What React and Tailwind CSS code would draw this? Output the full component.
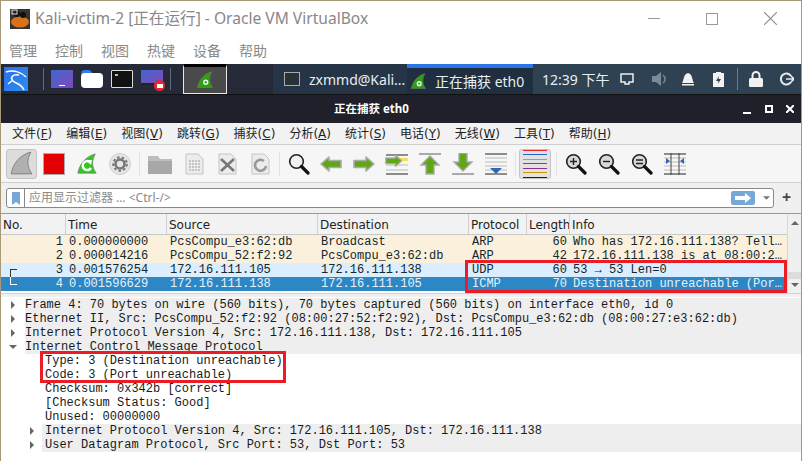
import React from "react";

const CJK = '"Noto Sans CJK SC"';
const Shark = ({ fill = "#39b51a", className = "", gear }) => (
  <svg viewBox="0 0 24 24" className={className}>
    <path d="M2 22 C4 12 10 4 21 1 C17 8 17 15 22 22 Z" fill={fill} stroke="#777" strokeWidth="0.8" />
    {gear && <circle cx="13" cy="15" r="2.6" fill="none" stroke="#dfe" strokeWidth="2" />}
  </svg>
);
const Arrow = ({ dir = 0 }) => (
  <svg viewBox="0 0 22 22" className="w-[22px] h-[22px]">
    <g transform={`rotate(${dir} 11 11)`}>
      <path d="M1 11 L9 4 V7.5 H21 V14.5 H9 V18 Z" fill="#5fa814" stroke="#aaa" strokeWidth="1.6" strokeLinejoin="round" />
    </g>
  </svg>
);
const Mag = ({ sign }) => (
  <svg viewBox="0 0 22 22" className="w-[22px] h-[22px]">
    <circle cx="8.5" cy="8.5" r="6.8" fill={sign ? "#d8d8d8" : "#eef2f2"} stroke="#222" strokeWidth="1.6" />
    <path d="M13.5 13.5 L20 20" stroke="#111" strokeWidth="3.2" strokeLinecap="round" />
    {sign === "+" && <path d="M5 8.5H12M8.5 5V12" stroke="#222" strokeWidth="1.4" />}
    {sign === "-" && <path d="M5 8.5H12" stroke="#222" strokeWidth="1.4" />}
    {sign === "=" && <path d="M5 7H12M5 10.5H12" stroke="#222" strokeWidth="1.4" />}
  </svg>
);
const Doc = ({ mark }) => (
  <svg viewBox="0 0 22 22" className="w-[22px] h-[22px]">
    <path d="M3 1 H15 L20 6 V21 H3 Z" fill="#ececec" stroke="#c4c4c4" />
    {!mark && <g stroke="#9a9a9a" strokeDasharray="2 1"><path d="M6 8H17M6 11H17M6 14H17M6 17H17" /></g>}
    {mark === "x" && <path d="M5 6 L18 18 M18 6 L5 18" stroke="#777" strokeWidth="2.6" />}
    {mark === "r" && <path d="M15 8 A5.5 5.5 0 1 0 17 13" fill="none" stroke="#999" strokeWidth="2.6" />}
  </svg>
);
const Lines = ({ children, lines, color = "#222" }) => (
  <svg viewBox="0 0 22 22" className="w-[22px] h-[22px]">
    {lines.map((y, i) => <path key={i} d={`M0 ${y}H22`} stroke={i === lines.length - 1 || i === 0 ? color : "#bbb"} />)}
    {children}
  </svg>
);

const tools = [
  <svg key="s" viewBox="0 0 22 22" className="w-[22px] h-[22px]"><rect x="0.5" y="0.5" width="21" height="21" fill="#e40000" stroke="#aaa" /></svg>,
  <div key="r" className="relative w-[22px] h-[22px]">
    <Shark className="w-[22px] h-[24px] -mt-px" fill="#2ecb1c" />
    <svg viewBox="0 0 22 22" className="absolute inset-0 w-[22px] h-[22px]"><path d="M14 9 A4.5 4.5 0 1 0 15 15" fill="none" stroke="#fff" strokeWidth="2.4" /><path d="M10 7 L16 7 L15 12 Z" fill="#fff" /></svg>
  </div>,
  <svg key="o" viewBox="0 0 22 22" className="w-[22px] h-[22px]"><circle cx="11" cy="11" r="10.5" fill="#e6e6e6" stroke="#ccc" /><circle cx="11" cy="11" r="4.5" fill="none" stroke="#777" strokeWidth="2.6" /><circle cx="11" cy="11" r="6.8" fill="none" stroke="#777" strokeWidth="2" strokeDasharray="2.6 2.2" /></svg>,
];
const Sep = () => <div className="w-px h-[24px] bg-[#e2e2e2] mx-[-3px]" />;

const rows = [
  { n: 1, t: "0.000000000", s: "PcsCompu_e3:62:db", d: "Broadcast", p: "ARP", l: 60, i: "Who has 172.16.111.138? Tell…", bg: "bg-[#faf0dc]", fg: "text-[#12272e]" },
  { n: 2, t: "0.000014216", s: "PcsCompu_52:f2:92", d: "PcsCompu_e3:62:db", p: "ARP", l: 42, i: "172.16.111.138 is at 08:00:2…", bg: "bg-[#faf0dc]", fg: "text-[#12272e]" },
  { n: 3, t: "0.001576254", s: "172.16.111.105", d: "172.16.111.138", p: "UDP", l: 60, i: "53 → 53 Len=0", bg: "bg-[#daeeff]", fg: "text-[#12272e]" },
  { n: 4, t: "0.001596629", s: "172.16.111.138", d: "172.16.111.105", p: "ICMP", l: 70, i: "Destination unreachable (Por…", bg: "bg-[#2d87c4]", fg: "text-[#e6f2fa]" },
];
const cols = "grid grid-cols-[65px_101px_151px_151px_58px_43px_218px]";
const headers = ["No.", "Time", "Source", "Destination", "Protocol", "Length", "Info"];

const Tri = ({ open }) => (
  <svg viewBox="0 0 8 8" className="w-2 h-2 shrink-0">
    {open ? <path d="M0 2H8L4 6Z" fill="#666" /> : <path d="M2 0V8L6 4Z" fill="#666" />}
  </svg>
);
const Node = ({ indent, text, open }) => (
  <div className={`flex items-center h-[14px] ${indent ? "pl-[27px]" : "pl-[8px]"}`}>
    <Tri open={open} />
    <div className={`flex-1 h-full bg-[#eeeeee] whitespace-pre overflow-hidden ${indent ? "ml-[6px] pl-[3px]" : "ml-[8px]"}`}>{text}</div>
  </div>
);
const Leaf = ({ text }) => <div className="h-[14px] pl-[44px] whitespace-pre">{text}</div>;

const menu = [["文件", "F"], ["编辑", "E"], ["视图", "V"], ["跳转", "G"], ["捕获", "C"], ["分析", "A"], ["统计", "S"], ["电话", "Y"], ["无线", "W"], ["工具", "T"], ["帮助", "H"]];

export default function App() {
  return (
    <div className="w-[802px] h-[461px] overflow-hidden bg-white border-t border-l border-r border-[#a89878] flex flex-col relative" style={{ fontFamily: `"Noto Sans", ${CJK}, sans-serif` }}>
      {/* VirtualBox title */}
      <div className="h-[34px] flex items-center shrink-0 pt-[1px]">
        <svg viewBox="0 0 20 20" className="w-[20px] h-[20px] ml-[9px]">
          <rect width="20" height="20" fill="#333" />
          <ellipse cx="10" cy="13" rx="9" ry="5.5" fill="#d9701a" />
          <circle cx="7" cy="5" r="3" fill="#111" /><circle cx="13" cy="6" r="3" fill="#111" />
          <rect x="2" y="1" width="5" height="4" fill="none" stroke="#ddd" />
        </svg>
        <span className="ml-[5px] mt-[1px] text-[15.6px] text-[#888888] leading-none whitespace-pre">Kali-victim-2 [正在运行] - Oracle VM VirtualBox</span>
        <div className="ml-auto flex items-center mr-[24px]">
          <div className="w-[12px] h-px bg-[#999] mr-[46px]" />
          <div className="w-[12px] h-[12px] border border-[#999] mr-[46px]" />
          <svg viewBox="0 0 12 12" className="w-[13px] h-[13px]"><path d="M0 0L12 12M12 0L0 12" stroke="#888" /></svg>
        </div>
      </div>
      {/* VirtualBox menu */}
      <div className="h-[29px] flex items-center pl-[8px] pt-[2px] gap-[16px] text-[14px] text-[#8a8a8a] shrink-0">
        {["管理", "控制", "视图", "热键", "设备", "帮助"].map((m) => <span key={m} className="w-[30px]">{m}</span>)}
      </div>
      {/* XFCE panel */}
      <div className="h-[30px] flex shrink-0 bg-[#2a3040] text-[#e8eef2] text-[14px]">
        <div className="flex items-center w-[272px] bg-[#262a38] relative">
          <div className="ml-[3px] w-[24px] h-[24px] bg-gradient-to-br from-[#2f6fe8] to-[#2a8cf0] overflow-hidden">
            <svg viewBox="0 0 24 24" className="w-full h-full"><path d="M2 5C10 2 18 6 22 10M15 8C8 7 6 11 9 14C12 17 17 16 20 23M9 13L4 17" fill="none" stroke="#fff" strokeWidth="1.5" /></svg>
          </div>
          <div className="ml-[15px] w-[1px] h-[22px] bg-[#666b78]" />
          <div className="ml-[7px] w-[22px] h-[18px] bg-gradient-to-br from-[#3a66d0] to-[#7a48b8] flex items-end justify-center pb-[2px]">
            <div className="w-[6px] h-px bg-white" />
          </div>
          <div className="ml-[8px] w-[22px] h-[18px] relative">
            <div className="absolute left-0 top-0 w-[11px] h-[5px] bg-[#2b7df0] rounded-t-sm" />
            <div className="absolute left-0 right-0 top-[3px] bottom-0 bg-white rounded-sm" />
          </div>
          <div className="ml-[8px] w-[22px] h-[18px] bg-[#111] border border-[#ddd] rounded-[1px] pl-[3px] pt-[3px]">
            <div className="w-[3px] h-[2px] bg-[#bbb]" />
          </div>
          <div className="ml-[8px] w-[22px] h-[15px] -mt-[3px] bg-gradient-to-br from-[#3a66d0] to-[#7a48b8] border-b-2 border-[#222] relative">
            <div className="absolute right-[-2px] bottom-[-8px] w-[11px] h-[11px] rounded-full bg-[#e8262a] flex items-center justify-center">
              <div className="w-[6px] h-[4px] bg-white" />
            </div>
          </div>
          <div className="ml-[7px] w-[1px] h-[22px] bg-[#666b78]" />
          <div className="ml-[12px] w-[44px] h-[30px] bg-[#4a4a4a] border border-[#e8e8e8] border-t-[3px] border-t-black flex items-center justify-center">
            <Shark className="w-[18px] h-[18px]" fill="#2f9e10" gear />
          </div>
        </div>
        <div className="w-[134px] bg-[#253547] flex items-center pl-[11px] overflow-hidden">
          <div className="w-[16px] h-[14px] bg-[#263238] border border-[#aaa] shrink-0" />
          <span className="ml-[9px] whitespace-pre">zxmmd@Kali...</span>
        </div>
        <div className="w-[126px] bg-[#1f2f40] border-t-[4px] border-[#2b75e8] flex items-center pl-[3px]">
          <Shark className="w-[17px] h-[17px]" fill="#2f9e10" gear />
          <span className="ml-[8px] whitespace-pre">正在捕获 eth0</span>
        </div>
        <div className="flex-1 bg-[#2f4254] flex items-center">
          <span className="ml-[9px] whitespace-pre w-[77px]">12:39 下午</span>
          <svg viewBox="0 0 14 12" className="ml-[1px] w-[14px] h-[12px]"><path d="M1 1H13V9H9V11H5V9H1Z" fill="none" stroke="#eee" strokeWidth="1.5" /></svg>
          <svg viewBox="0 0 16 16" className="ml-[17px] w-[16px] h-[16px]"><path d="M1 5H5L10 1V15L5 11H1Z" fill="#7a8a96" /><path d="M12 4A5 5 0 0 1 12 12" fill="none" stroke="#7a8a96" strokeWidth="1.5" /></svg>
          <svg viewBox="0 0 14 16" className="ml-[14px] w-[14px] h-[16px]"><path d="M1 12C3 10 2 3 7 2C12 3 11 10 13 12Z" fill="#f2f2f2" /><rect x="1" y="13" width="12" height="1.5" fill="#f2f2f2" /></svg>
          <svg viewBox="0 0 11 15" className="ml-[18px] w-[11px] h-[15px]"><path d="M3 0H8V1H11V15H0V1H3Z" fill="#f2f2f2" /><path d="M6 4L3 9H5.5L5 12L8 7H5.5Z" fill="#2f4254" /></svg>
          <div className="ml-[13px] w-px h-[22px] bg-[#6a7a86]" />
          <svg viewBox="0 0 14 16" className="ml-[11px] w-[14px] h-[16px]"><rect y="7" width="14" height="9" rx="1.5" fill="#f2f2f2" /><path d="M3.5 7V4.5A3.5 3.5 0 0 1 10.5 4.5V7" fill="none" stroke="#f2f2f2" strokeWidth="2" /></svg>
          <svg viewBox="0 0 14 14" className="ml-[17px] w-[14px] h-[14px]"><path d="M11 4A5.5 5.5 0 1 0 11 10" fill="none" stroke="#e8e8e8" strokeWidth="2" /><path d="M6 7H14M11 4L14 7L11 10" fill="none" stroke="#e8e8e8" strokeWidth="1.6" /></svg>
        </div>
      </div>
      {/* Wireshark title */}
      <div className="h-[29px] bg-[#1f2029] border-t border-[#111] flex items-center text-white text-[11.5px] font-bold shrink-0 relative">
        <span className="absolute left-[333px] whitespace-pre">正在捕获 eth0</span>
        <div className="ml-auto flex items-center mr-[7px]">
          <div className="w-[8px] h-[2px] bg-white mt-[7px] mr-[14px]" />
          <div className="w-[8px] h-[8px] border-2 border-white mr-[13px]" />
          <svg viewBox="0 0 8 8" className="w-[8px] h-[8px]"><path d="M0 0L8 8M8 0L0 8" stroke="#fff" strokeWidth="2" /></svg>
        </div>
      </div>
      {/* Wireshark menu */}
      <div className="h-[21px] bg-[#f2f2f2] flex items-center pl-[11px] gap-[14px] text-[12px] text-[#222] shrink-0 leading-none" style={{ fontFamily: `"DejaVu Sans", ${CJK}, sans-serif` }}>
        {menu.map(([m, k]) => (
          <span key={k} className="whitespace-pre">{m}(<span className="underline">{k}</span>)</span>
        ))}
      </div>
      {/* Toolbar */}
      <div className="h-[39px] bg-[#f6f6f6] border-t border-b border-[#cfcfcf] flex items-center pl-[5px] shrink-0">
        <div className="w-[31px] h-[30px] bg-[#dcdcdc] border border-[#c4c4c4] rounded-[3px] flex items-center justify-center">
          <Shark className="w-[25px] h-[25px]" fill="#b0b0b0" />
        </div>
        <div className="ml-[6px] flex items-center gap-[11px]">
          {tools}
          <Sep />
          <svg viewBox="0 0 24 20" className="w-[24px] h-[20px]"><path d="M0 2H10L12 5H24V20H0Z" fill="#bdbdbd" /><rect x="0" y="7" width="24" height="13" fill="#a8a8a8" /></svg>
          <Doc />
          <Doc mark="x" />
          <Doc mark="r" />
          <Sep />
          <div className="-mr-[1px]"><Mag /></div>
          <Arrow dir={0} />
          <Arrow dir={180} />
          <div className="relative w-[22px] h-[22px]">
            <Lines lines={[2, 7, 12, 17, 21]}><rect x="14" y="5" width="8" height="3" fill="#f4e04d" /></Lines>
            <div className="absolute -left-[1px] -top-[1px] scale-[0.8] origin-top-left"><Arrow dir={180} /></div>
          </div>
          <svg viewBox="0 0 22 22" className="w-[22px] h-[22px]"><path d="M0 1H22" stroke="#aaa" strokeWidth="2" /><path d="M11 3L20 12H15V21H7V12H2Z" fill="#5fa814" stroke="#aaa" strokeWidth="1.4" /></svg>
          <svg viewBox="0 0 22 22" className="w-[22px] h-[22px]"><path d="M0 21H22" stroke="#aaa" strokeWidth="2" /><path d="M7 0H15V9H20L11 18L2 9H7Z" fill="#5fa814" stroke="#aaa" strokeWidth="1.4" /></svg>
          <Lines lines={[1, 5, 9, 13, 17, 21]}><path d="M5 15H17L11 21Z" fill="#2f67b0" /></Lines>
          <Sep />
          <div className="-ml-[5px] -mr-[3px] w-[32px] h-[30px] bg-[#e2e2e2] border border-[#c4c4c4] rounded-[3px] flex flex-col justify-center gap-[3.5px] px-[3px]">
            {["#e22", "#26c", "#7c1", "#26c", "#838", "#c90", "#222"].map((c, i) => <div key={i} className="h-px" style={{ backgroundColor: c }} />)}
          </div>
          <Sep />
          <Mag sign="+" />
          <Mag sign="-" />
          <Mag sign="=" />
          <Lines lines={[1, 5, 9, 13, 17, 21]}>
            <path d="M7 0V22M15 0V22" stroke="#444" />
            <path d="M2 5L6 8L2 11ZM20 5L16 8L20 11Z" fill="#2f67b0" />
          </Lines>
        </div>
      </div>
      {/* Filter */}
      <div className="h-[30px] bg-[#f0f0f0] pt-[5px] pl-[5px] pr-[6px] flex items-start shrink-0">
        <div className="h-[20px] w-[768px] bg-white border border-[#888] rounded-[3px] flex items-center overflow-hidden">
          <div className="w-[18px] h-full border-r border-[#888] flex items-center justify-center">
            <svg viewBox="0 0 8 13" className="w-[8px] h-[13px]"><path d="M0 0H8V13L4 10L0 13Z" fill="#7aa7d8" /></svg>
          </div>
          <span className="ml-[4px] text-[12px] text-[#8a8a8a] whitespace-pre">应用显示过滤器 … &lt;Ctrl-/&gt;</span>
          <div className="ml-auto w-[24px] h-[14px] bg-[#78a8d8] rounded-[2px] flex items-center justify-center">
            <svg viewBox="0 0 16 10" className="w-[16px] h-[10px]"><path d="M0 3H10V0L16 5L10 10V7H0Z" fill="#fff" /></svg>
          </div>
          <svg viewBox="0 0 8 4" className="ml-[8px] mr-[3px] w-[7px] h-[4px]"><path d="M0 0H8L4 4Z" fill="#777" /></svg>
        </div>
        <span className="ml-[8px] -mt-[3px] text-[16px] font-bold text-[#444] leading-[24px]">+</span>
      </div>
      {/* Packet list */}
      <div className="h-[80px] flex shrink-0 border-t border-[#999] bg-white">
        <div className="flex-1 min-w-0">
          <div className={`${cols} h-[21px] bg-[#f2f2f2] border-b border-[#c8c8c8] text-[12px] text-[#222]`}>
            {headers.map((h) => (
              <div key={h} className="pl-[2px] pt-px border-r border-[#d0d0d0] overflow-hidden whitespace-nowrap leading-[20px]" style={{ fontFamily: '"DejaVu Sans", sans-serif' }}>{h}</div>
            ))}
          </div>
          <div style={{ fontFamily: '"Liberation Mono", monospace' }} className="text-[12px]">
            {rows.map((r) => (
              <div key={r.n} className={`${cols} h-[14px] leading-[14px] ${r.bg} ${r.fg} whitespace-pre`}>
                <div className="text-right pr-[3px] relative">
                  {r.n === 3 && <div className="absolute left-[9px] top-[6px] w-[7px] h-[9px] border-l border-t border-[#333]" />}
                  {r.n === 4 && <div className="absolute left-[9px] top-0 w-[7px] h-[8px] border-l border-b border-white" />}
                  {r.n}
                </div>
                <div className="pl-[3px]">{r.t}</div>
                <div className="pl-[3px]">{r.s}</div>
                <div className="pl-[3px]">{r.d}</div>
                <div className="pl-[3px]">{r.p}</div>
                <div className="text-right pr-[3px]">{r.l}</div>
                <div className="pl-[3px]">{r.i}</div>
              </div>
            ))}
          </div>
        </div>
        <div className="w-[14px] shrink-0 bg-[#f0f0f0] border-l border-[#d8d8d8] flex flex-col items-center">
          <svg viewBox="0 0 8 4" className="mt-[7px] w-[8px] h-[4px]"><path d="M0 4H8L4 0Z" fill="#666" /></svg>
          <div className="mt-[47px] w-full h-[7px] bg-[#dcdcdc]" />
          <svg viewBox="0 0 8 4" className="mt-[4px] w-[8px] h-[4px]"><path d="M0 0H8L4 4Z" fill="#666" /></svg>
        </div>
      </div>
      {/* Splitter */}
      <div className="h-[4px] bg-[#f0f0f0] border-t border-[#bcd8ea] shrink-0" />
      {/* Details */}
      <div className="flex-1 bg-white text-[12px] leading-[14px] text-[#1a1a1a] pt-px" style={{ fontFamily: '"Liberation Mono", monospace' }}>
        <Node text="Frame 4: 70 bytes on wire (560 bits), 70 bytes captured (560 bits) on interface eth0, id 0" />
        <Node text="Ethernet II, Src: PcsCompu_52:f2:92 (08:00:27:52:f2:92), Dst: PcsCompu_e3:62:db (08:00:27:e3:62:db)" />
        <Node text="Internet Protocol Version 4, Src: 172.16.111.138, Dst: 172.16.111.105" />
        <Node open text="Internet Control Message Protocol" />
        <Leaf text="Type: 3 (Destination unreachable)" />
        <Leaf text="Code: 3 (Port unreachable)" />
        <Leaf text="Checksum: 0x342b [correct]" />
        <Leaf text="[Checksum Status: Good]" />
        <Leaf text="Unused: 00000000" />
        <Node indent text="Internet Protocol Version 4, Src: 172.16.111.105, Dst: 172.16.111.138" />
        <Node indent text="User Datagram Protocol, Src Port: 53, Dst Port: 53" />
      </div>
      {/* Annotations */}
      <div className="absolute left-[464px] top-[259px] w-[322px] h-[33px] border-[3px] border-[#ed1c24]" />
      <div className="absolute left-[39px] top-[350px] w-[246px] h-[32px] border-[3px] border-[#ed1c24]" />
    </div>
  );
}
